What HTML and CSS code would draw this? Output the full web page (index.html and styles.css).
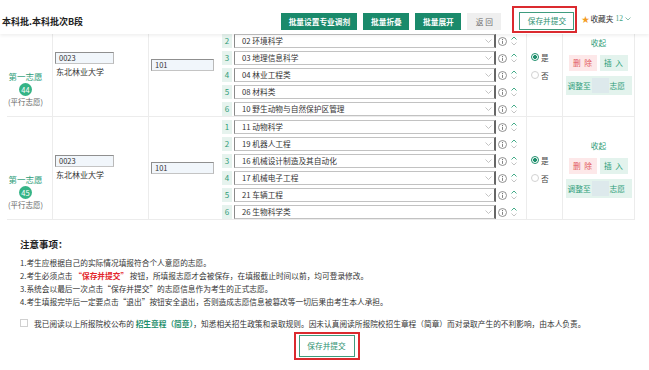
FILE: index.html
```html
<!DOCTYPE html>
<html lang="zh-CN">
<head>
<meta charset="utf-8">
<title>志愿填报</title>
<link rel="stylesheet" href="styles.css">
</head>
<body>
<div class="page">
  <header class="topbar">
    <div class="title">本科批.本科批次B段</div>
    <div class="tools">
      <button class="btn btn-green w76">批量设置专业调剂</button>
      <button class="btn btn-green w46">批量折叠</button>
      <button class="btn btn-green w46">批量展开</button>
      <button class="btn btn-gray">返 回</button>
      <span class="mark mark-top"><button class="btn btn-outline">保存并提交</button></span>
      <span class="fav"><span class="star">★</span><span>收藏夹</span><span class="fav-num">12</span><svg class="fav-chev" width="6" height="4" viewBox="0 0 6 4"><polyline points="0.5,0.5 3,3 5.5,0.5" fill="none" stroke="#7fb8a4" stroke-width="0.9"/></svg></span>
    </div>
  </header>

  <div class="table">
    <div class="group">
      <div class="c1"><div class="order">第一志愿</div><div class="badge">44</div><div class="ptype">(平行志愿)</div></div>
      <div class="c2"><div class="inp w59">0023</div><div class="school">东北林业大学</div></div>
      <div class="c3"><div class="inp w63">101</div></div>
      <div class="c4">
        <div class="mrow"><span class="num">1</span><span class="sel"><span>01 林学</span><svg class="chev" width="7" height="4" viewBox="0 0 7 4"><polyline points="0.5,0.5 3.5,3.5 6.5,0.5" fill="none" stroke="#b5b5b5" stroke-width="0.8"/></svg></span><svg class="info" width="9" height="9" viewBox="0 0 9 9"><circle cx="4.5" cy="4.5" r="4" fill="none" stroke="#777" stroke-width="0.8"/><line x1="4.5" y1="3.8" x2="4.5" y2="6.9" stroke="#777" stroke-width="0.9"/><circle cx="4.5" cy="2.4" r="0.55" fill="#777"/></svg><span class="carets"><svg width="6" height="4" viewBox="0 0 6 4"><polyline points="0.5,3.5 3,1 5.5,3.5" fill="none" stroke="#2fa37c" stroke-width="0.9"/></svg><svg width="6" height="4" viewBox="0 0 6 4"><polyline points="0.5,0.5 3,3 5.5,0.5" fill="none" stroke="#bdbdbd" stroke-width="0.9"/></svg></span></div>
        <div class="mrow"><span class="num">2</span><span class="sel"><span>02 环境科学</span><svg class="chev" width="7" height="4" viewBox="0 0 7 4"><polyline points="0.5,0.5 3.5,3.5 6.5,0.5" fill="none" stroke="#b5b5b5" stroke-width="0.8"/></svg></span><svg class="info" width="9" height="9" viewBox="0 0 9 9"><circle cx="4.5" cy="4.5" r="4" fill="none" stroke="#777" stroke-width="0.8"/><line x1="4.5" y1="3.8" x2="4.5" y2="6.9" stroke="#777" stroke-width="0.9"/><circle cx="4.5" cy="2.4" r="0.55" fill="#777"/></svg><span class="carets"><svg width="6" height="4" viewBox="0 0 6 4"><polyline points="0.5,3.5 3,1 5.5,3.5" fill="none" stroke="#2fa37c" stroke-width="0.9"/></svg><svg width="6" height="4" viewBox="0 0 6 4"><polyline points="0.5,0.5 3,3 5.5,0.5" fill="none" stroke="#bdbdbd" stroke-width="0.9"/></svg></span></div>
        <div class="mrow"><span class="num">3</span><span class="sel"><span>03 地理信息科学</span><svg class="chev" width="7" height="4" viewBox="0 0 7 4"><polyline points="0.5,0.5 3.5,3.5 6.5,0.5" fill="none" stroke="#b5b5b5" stroke-width="0.8"/></svg></span><svg class="info" width="9" height="9" viewBox="0 0 9 9"><circle cx="4.5" cy="4.5" r="4" fill="none" stroke="#777" stroke-width="0.8"/><line x1="4.5" y1="3.8" x2="4.5" y2="6.9" stroke="#777" stroke-width="0.9"/><circle cx="4.5" cy="2.4" r="0.55" fill="#777"/></svg><span class="carets"><svg width="6" height="4" viewBox="0 0 6 4"><polyline points="0.5,3.5 3,1 5.5,3.5" fill="none" stroke="#2fa37c" stroke-width="0.9"/></svg><svg width="6" height="4" viewBox="0 0 6 4"><polyline points="0.5,0.5 3,3 5.5,0.5" fill="none" stroke="#bdbdbd" stroke-width="0.9"/></svg></span></div>
        <div class="mrow"><span class="num">4</span><span class="sel"><span>04 林业工程类</span><svg class="chev" width="7" height="4" viewBox="0 0 7 4"><polyline points="0.5,0.5 3.5,3.5 6.5,0.5" fill="none" stroke="#b5b5b5" stroke-width="0.8"/></svg></span><svg class="info" width="9" height="9" viewBox="0 0 9 9"><circle cx="4.5" cy="4.5" r="4" fill="none" stroke="#777" stroke-width="0.8"/><line x1="4.5" y1="3.8" x2="4.5" y2="6.9" stroke="#777" stroke-width="0.9"/><circle cx="4.5" cy="2.4" r="0.55" fill="#777"/></svg><span class="carets"><svg width="6" height="4" viewBox="0 0 6 4"><polyline points="0.5,3.5 3,1 5.5,3.5" fill="none" stroke="#2fa37c" stroke-width="0.9"/></svg><svg width="6" height="4" viewBox="0 0 6 4"><polyline points="0.5,0.5 3,3 5.5,0.5" fill="none" stroke="#bdbdbd" stroke-width="0.9"/></svg></span></div>
        <div class="mrow"><span class="num">5</span><span class="sel"><span>08 材料类</span><svg class="chev" width="7" height="4" viewBox="0 0 7 4"><polyline points="0.5,0.5 3.5,3.5 6.5,0.5" fill="none" stroke="#b5b5b5" stroke-width="0.8"/></svg></span><svg class="info" width="9" height="9" viewBox="0 0 9 9"><circle cx="4.5" cy="4.5" r="4" fill="none" stroke="#777" stroke-width="0.8"/><line x1="4.5" y1="3.8" x2="4.5" y2="6.9" stroke="#777" stroke-width="0.9"/><circle cx="4.5" cy="2.4" r="0.55" fill="#777"/></svg><span class="carets"><svg width="6" height="4" viewBox="0 0 6 4"><polyline points="0.5,3.5 3,1 5.5,3.5" fill="none" stroke="#2fa37c" stroke-width="0.9"/></svg><svg width="6" height="4" viewBox="0 0 6 4"><polyline points="0.5,0.5 3,3 5.5,0.5" fill="none" stroke="#bdbdbd" stroke-width="0.9"/></svg></span></div>
        <div class="mrow"><span class="num">6</span><span class="sel"><span>10 野生动物与自然保护区管理</span><svg class="chev" width="7" height="4" viewBox="0 0 7 4"><polyline points="0.5,0.5 3.5,3.5 6.5,0.5" fill="none" stroke="#b5b5b5" stroke-width="0.8"/></svg></span><svg class="info" width="9" height="9" viewBox="0 0 9 9"><circle cx="4.5" cy="4.5" r="4" fill="none" stroke="#777" stroke-width="0.8"/><line x1="4.5" y1="3.8" x2="4.5" y2="6.9" stroke="#777" stroke-width="0.9"/><circle cx="4.5" cy="2.4" r="0.55" fill="#777"/></svg><span class="carets"><svg width="6" height="4" viewBox="0 0 6 4"><polyline points="0.5,3.5 3,1 5.5,3.5" fill="none" stroke="#2fa37c" stroke-width="0.9"/></svg><svg width="6" height="4" viewBox="0 0 6 4"><polyline points="0.5,0.5 3,3 5.5,0.5" fill="none" stroke="#bdbdbd" stroke-width="0.9"/></svg></span></div>
      </div>
      <div class="c5">
        <div class="radio on"><span class="dot"></span>是</div>
        <div class="radio"><span class="dot"></span>否</div>
      </div>
      <div class="c6">
        <div class="fold">收起</div>
        <div class="pair"><span class="del">删 除</span><span class="ins">插 入</span></div>
        <div class="adj"><span>调整至</span><span class="adj-inp"></span><span>志愿</span></div>
      </div>
    </div>

    <div class="group">
      <div class="c1"><div class="order">第一志愿</div><div class="badge">45</div><div class="ptype">(平行志愿)</div></div>
      <div class="c2"><div class="inp w59">0023</div><div class="school">东北林业大学</div></div>
      <div class="c3"><div class="inp w63">101</div></div>
      <div class="c4">
        <div class="mrow"><span class="num">1</span><span class="sel"><span>11 动物科学</span><svg class="chev" width="7" height="4" viewBox="0 0 7 4"><polyline points="0.5,0.5 3.5,3.5 6.5,0.5" fill="none" stroke="#b5b5b5" stroke-width="0.8"/></svg></span><svg class="info" width="9" height="9" viewBox="0 0 9 9"><circle cx="4.5" cy="4.5" r="4" fill="none" stroke="#777" stroke-width="0.8"/><line x1="4.5" y1="3.8" x2="4.5" y2="6.9" stroke="#777" stroke-width="0.9"/><circle cx="4.5" cy="2.4" r="0.55" fill="#777"/></svg><span class="carets"><svg width="6" height="4" viewBox="0 0 6 4"><polyline points="0.5,3.5 3,1 5.5,3.5" fill="none" stroke="#2fa37c" stroke-width="0.9"/></svg><svg width="6" height="4" viewBox="0 0 6 4"><polyline points="0.5,0.5 3,3 5.5,0.5" fill="none" stroke="#bdbdbd" stroke-width="0.9"/></svg></span></div>
        <div class="mrow"><span class="num">2</span><span class="sel"><span>19 机器人工程</span><svg class="chev" width="7" height="4" viewBox="0 0 7 4"><polyline points="0.5,0.5 3.5,3.5 6.5,0.5" fill="none" stroke="#b5b5b5" stroke-width="0.8"/></svg></span><svg class="info" width="9" height="9" viewBox="0 0 9 9"><circle cx="4.5" cy="4.5" r="4" fill="none" stroke="#777" stroke-width="0.8"/><line x1="4.5" y1="3.8" x2="4.5" y2="6.9" stroke="#777" stroke-width="0.9"/><circle cx="4.5" cy="2.4" r="0.55" fill="#777"/></svg><span class="carets"><svg width="6" height="4" viewBox="0 0 6 4"><polyline points="0.5,3.5 3,1 5.5,3.5" fill="none" stroke="#2fa37c" stroke-width="0.9"/></svg><svg width="6" height="4" viewBox="0 0 6 4"><polyline points="0.5,0.5 3,3 5.5,0.5" fill="none" stroke="#bdbdbd" stroke-width="0.9"/></svg></span></div>
        <div class="mrow"><span class="num">3</span><span class="sel"><span>16 机械设计制造及其自动化</span><svg class="chev" width="7" height="4" viewBox="0 0 7 4"><polyline points="0.5,0.5 3.5,3.5 6.5,0.5" fill="none" stroke="#b5b5b5" stroke-width="0.8"/></svg></span><svg class="info" width="9" height="9" viewBox="0 0 9 9"><circle cx="4.5" cy="4.5" r="4" fill="none" stroke="#777" stroke-width="0.8"/><line x1="4.5" y1="3.8" x2="4.5" y2="6.9" stroke="#777" stroke-width="0.9"/><circle cx="4.5" cy="2.4" r="0.55" fill="#777"/></svg><span class="carets"><svg width="6" height="4" viewBox="0 0 6 4"><polyline points="0.5,3.5 3,1 5.5,3.5" fill="none" stroke="#2fa37c" stroke-width="0.9"/></svg><svg width="6" height="4" viewBox="0 0 6 4"><polyline points="0.5,0.5 3,3 5.5,0.5" fill="none" stroke="#bdbdbd" stroke-width="0.9"/></svg></span></div>
        <div class="mrow"><span class="num">4</span><span class="sel"><span>17 机械电子工程</span><svg class="chev" width="7" height="4" viewBox="0 0 7 4"><polyline points="0.5,0.5 3.5,3.5 6.5,0.5" fill="none" stroke="#b5b5b5" stroke-width="0.8"/></svg></span><svg class="info" width="9" height="9" viewBox="0 0 9 9"><circle cx="4.5" cy="4.5" r="4" fill="none" stroke="#777" stroke-width="0.8"/><line x1="4.5" y1="3.8" x2="4.5" y2="6.9" stroke="#777" stroke-width="0.9"/><circle cx="4.5" cy="2.4" r="0.55" fill="#777"/></svg><span class="carets"><svg width="6" height="4" viewBox="0 0 6 4"><polyline points="0.5,3.5 3,1 5.5,3.5" fill="none" stroke="#2fa37c" stroke-width="0.9"/></svg><svg width="6" height="4" viewBox="0 0 6 4"><polyline points="0.5,0.5 3,3 5.5,0.5" fill="none" stroke="#bdbdbd" stroke-width="0.9"/></svg></span></div>
        <div class="mrow"><span class="num">5</span><span class="sel"><span>21 车辆工程</span><svg class="chev" width="7" height="4" viewBox="0 0 7 4"><polyline points="0.5,0.5 3.5,3.5 6.5,0.5" fill="none" stroke="#b5b5b5" stroke-width="0.8"/></svg></span><svg class="info" width="9" height="9" viewBox="0 0 9 9"><circle cx="4.5" cy="4.5" r="4" fill="none" stroke="#777" stroke-width="0.8"/><line x1="4.5" y1="3.8" x2="4.5" y2="6.9" stroke="#777" stroke-width="0.9"/><circle cx="4.5" cy="2.4" r="0.55" fill="#777"/></svg><span class="carets"><svg width="6" height="4" viewBox="0 0 6 4"><polyline points="0.5,3.5 3,1 5.5,3.5" fill="none" stroke="#2fa37c" stroke-width="0.9"/></svg><svg width="6" height="4" viewBox="0 0 6 4"><polyline points="0.5,0.5 3,3 5.5,0.5" fill="none" stroke="#bdbdbd" stroke-width="0.9"/></svg></span></div>
        <div class="mrow"><span class="num">6</span><span class="sel"><span>26 生物科学类</span><svg class="chev" width="7" height="4" viewBox="0 0 7 4"><polyline points="0.5,0.5 3.5,3.5 6.5,0.5" fill="none" stroke="#b5b5b5" stroke-width="0.8"/></svg></span><svg class="info" width="9" height="9" viewBox="0 0 9 9"><circle cx="4.5" cy="4.5" r="4" fill="none" stroke="#777" stroke-width="0.8"/><line x1="4.5" y1="3.8" x2="4.5" y2="6.9" stroke="#777" stroke-width="0.9"/><circle cx="4.5" cy="2.4" r="0.55" fill="#777"/></svg><span class="carets"><svg width="6" height="4" viewBox="0 0 6 4"><polyline points="0.5,3.5 3,1 5.5,3.5" fill="none" stroke="#2fa37c" stroke-width="0.9"/></svg><svg width="6" height="4" viewBox="0 0 6 4"><polyline points="0.5,0.5 3,3 5.5,0.5" fill="none" stroke="#bdbdbd" stroke-width="0.9"/></svg></span></div>
      </div>
      <div class="c5">
        <div class="radio on"><span class="dot"></span>是</div>
        <div class="radio"><span class="dot"></span>否</div>
      </div>
      <div class="c6">
        <div class="fold">收起</div>
        <div class="pair"><span class="del">删 除</span><span class="ins">插 入</span></div>
        <div class="adj"><span>调整至</span><span class="adj-inp"></span><span>志愿</span></div>
      </div>
    </div>
  </div>

  <section class="notes">
    <h3 class="notes-title">注意事项：</h3>
    <div class="notes-list">
      <p>1.考生应根据自己的实际情况填报符合个人意愿的志愿。</p>
      <p>2.考生必须点击 <b class="hl">“保存并提交”</b> 按钮，所填报志愿才会被保存，在填报截止时间以前，均可登录修改。</p>
      <p>3.系统会以最后一次点击“保存并提交”的志愿信息作为考生的正式志愿。</p>
      <p>4.考生填报完毕后一定要点击“退出”按钮安全退出，否则造成志愿信息被篡改等一切后果由考生本人承担。</p>
    </div>
    <div class="agree"><span class="check"></span><span>我已阅读以上所报院校公布的 <b class="link">招生章程（简章）</b>，知悉相关招生政策和录取规则。因未认真阅读所报院校招生章程（简章）而对录取产生的不利影响，由本人负责。</span></div>
  </section>
  <div class="submit-row">
    <span class="mark mark-bottom"><button class="btn btn-outline btn-big">保存并提交</button></span>
  </div>
</div>
</body>
</html>
```

FILE: styles.css
```css
html, body {
  margin: 0;
  padding: 0;
}
body {
  width: 649px;
  height: 370px;
  overflow: hidden;
  background: #fff;
  font-family: "Noto Sans CJK SC", "Noto Sans", sans-serif;
  font-size: 7.7px;
  color: #333;
}
.page {
  position: relative;
  width: 649px;
  height: 370px;
  overflow: hidden;
}

/* top bar overlays the scrolled table */
.topbar {
  position: absolute;
  top: 0;
  left: 0;
  right: 0;
  height: 34px;
  background: #fff;
  box-shadow: 0 2px 3px rgba(0, 0, 0, 0.06);
  display: flex;
  align-items: flex-start;
  z-index: 2;
}
.title {
  margin-left: 2px;
  margin-top: 16px;
  font-size: 9px;
  line-height: 12px;
  font-weight: 700;
  color: #222;
  white-space: nowrap;
}
.tools {
  margin-left: auto;
  display: flex;
  align-items: flex-start;
  padding-right: 18px;
}
.btn {
  font-family: inherit;
  font-size: 7.7px;
  border: 0;
  padding: 0;
  margin: 0;
  height: 17px;
  line-height: 17px;
  text-align: center;
  box-sizing: border-box;
  white-space: nowrap;
  flex: none;
}
.tools > .btn {
  margin-top: 13px;
  margin-right: 6px;
}
.btn-green {
  background: #1a8a6b;
  color: #fff;
  font-weight: 700;
}
.w76 { width: 76px; }
.w46 { width: 46px; }
.btn-gray {
  width: 34px;
  background: #efefef;
  color: #6f6f6f;
  margin-right: 11px !important;
}
.btn-outline {
  background: #fff;
  border: 1px solid #3f9c7e;
  color: #2f9272;
  width: 55px;
  height: 18px;
  line-height: 16px;
}
.mark {
  display: inline-flex;
  border: 2px solid #db2a2f;
  flex: none;
}
.mark-top {
  margin-top: 6px;
  padding: 4px 1px 1px 5px;
}
.fav {
  margin-top: 13px;
  margin-left: 4px;
  display: flex;
  align-items: center;
  line-height: 12px;
  white-space: nowrap;
  color: #333;
  flex: none;
}
.fav > * {
  flex: none;
}
.star {
  color: #f39c1e;
  font-size: 8px;
  margin-right: 1px;
}
.fav-num {
  color: #3e9f80;
  font-family: "Liberation Serif", serif;
  font-size: 7.5px;
  margin-left: 2px;
}
.fav-chev {
  margin-left: 2px;
  display: block;
}

/* table */
.table {
  margin-left: 7px;
  width: 628px;
  padding-top: 14px;
}
.group {
  display: flex;
  height: 103px;
  box-sizing: border-box;
  border-bottom: 1px solid #ececec;
}
.c1, .c2, .c3, .c4, .c5, .c6 {
  box-sizing: border-box;
  flex: none;
}
.c1 {
  width: 46px;
  border-right: 1px solid #ececec;
  padding-top: 56px;
  padding-right: 8px;
  display: flex;
  flex-direction: column;
  align-items: center;
}
.order {
  color: #2c9c78;
  font-size: 8.5px;
  line-height: 12px;
  white-space: nowrap;
}
.badge {
  margin-top: 0.5px;
  width: 13px;
  height: 13px;
  border-radius: 50%;
  background: #35b486;
  color: #fff;
  font-size: 7.5px;
  line-height: 13px;
  text-align: center;
}
.ptype {
  color: #666;
  font-size: 7.5px;
  line-height: 12px;
  white-space: nowrap;
}
.c2 {
  width: 96px;
  border-right: 1px solid #ececec;
  padding-left: 2px;
  padding-top: 38px;
}
.c3 {
  width: 69px;
  padding-left: 2px;
  padding-top: 45px;
}
.inp {
  height: 12px;
  box-sizing: border-box;
  border: 1px solid #8f8f8f;
  border-right-color: #b9b9b9;
  border-bottom-color: #c4c4c4;
  background: #f1f6fb;
  padding-left: 3px;
  line-height: 10px;
  font-size: 7.5px;
  color: #333;
}
.w59 { width: 59px; }
.w63 { width: 63px; }
.school {
  margin-top: 2px;
  padding-left: 1px;
  line-height: 12px;
  font-size: 8px;
  color: #333;
}
.c4 {
  width: 308px;
  padding-left: 4px;
  padding-top: 3px;
}
.mrow {
  display: flex;
  align-items: center;
  height: 14px;
  margin-bottom: 3px;
}
.num {
  width: 10px;
  height: 14px;
  background: #e6f3ee;
  color: #2f9c78;
  text-align: center;
  line-height: 14px;
  font-size: 8px;
}
.sel {
  margin-left: 2px;
  width: 262px;
  height: 14px;
  box-sizing: border-box;
  border: 1px solid #c2c2c2;
  border-left-color: #8a8a8a;
  border-right: 2px solid #666;
  padding: 0 2px 0 7px;
  display: flex;
  align-items: center;
  justify-content: space-between;
  color: #333;
  line-height: 12px;
  white-space: nowrap;
}
.info {
  margin-left: 2px;
  flex: none;
}
.carets {
  margin-left: 4px;
  display: flex;
  flex-direction: column;
  gap: 2px;
}
.carets svg {
  display: block;
}
.c5 {
  width: 37px;
  border-left: 1px solid #ececec;
  border-right: 1px solid #ececec;
  padding-left: 4px;
  padding-top: 37px;
}
.radio {
  display: flex;
  align-items: center;
  gap: 2px;
  height: 12px;
  margin-bottom: 6px;
  color: #444;
}
.dot {
  width: 8px;
  height: 8px;
  box-sizing: border-box;
  border-radius: 50%;
  border: 1px solid #d2d2d2;
  background: #fff;
}
.radio.on .dot {
  border-color: #1f8f6d;
  background: radial-gradient(circle, #1f8f6d 0 1.8px, #fff 2.2px);
}
.c6 {
  width: 72px;
  border-right: 1px solid #ececec;
  padding-top: 23px;
  display: flex;
  flex-direction: column;
  align-items: center;
}
.fold {
  color: #2c9c78;
  line-height: 12px;
}
.pair {
  display: flex;
  gap: 3px;
  margin-top: 5.5px;
}
.del, .ins {
  width: 28px;
  height: 16px;
  line-height: 16px;
  text-align: center;
  letter-spacing: 1px;
}
.del {
  background: #fde8e9;
  color: #e2585c;
}
.ins {
  background: #e3f3ed;
  color: #2c9c78;
}
.adj {
  margin-top: 5px;
  width: 66px;
  height: 19px;
  box-sizing: border-box;
  padding-left: 2px;
  display: flex;
  align-items: center;
  background: #e3f3ed;
  color: #2c9c78;
  white-space: nowrap;
}
.adj-inp {
  width: 17px;
  height: 15px;
  background: #dde9ec;
  margin: 0 1px;
}

/* notes */
.notes {
  padding-left: 20px;
  padding-top: 17px;
}
.notes-title {
  margin: 0;
  font-size: 9.5px;
  line-height: 14px;
  font-weight: 700;
  color: #222;
}
.notes-list {
  margin-top: 4.5px;
}
.notes-list p {
  margin: 0;
  line-height: 13px;
  color: #333;
  white-space: nowrap;
}
.hl {
  color: #e3262b;
  font-weight: 700;
}
.agree {
  margin-top: 9px;
  display: flex;
  align-items: center;
  line-height: 13px;
  white-space: nowrap;
  color: #333;
}
.check {
  width: 8px;
  height: 8px;
  box-sizing: border-box;
  border: 1px solid #d0d0d0;
  margin-right: 6px;
  flex: none;
}
.link {
  color: #1f8f6d;
  font-weight: 700;
}
.submit-row {
  display: flex;
  justify-content: center;
  margin-top: 2.5px;
  padding-left: 4px;
}
.mark-bottom {
  padding: 1px 3px;
}
.btn-big {
  width: 56px;
  height: 22px;
  line-height: 20px;
}
```
